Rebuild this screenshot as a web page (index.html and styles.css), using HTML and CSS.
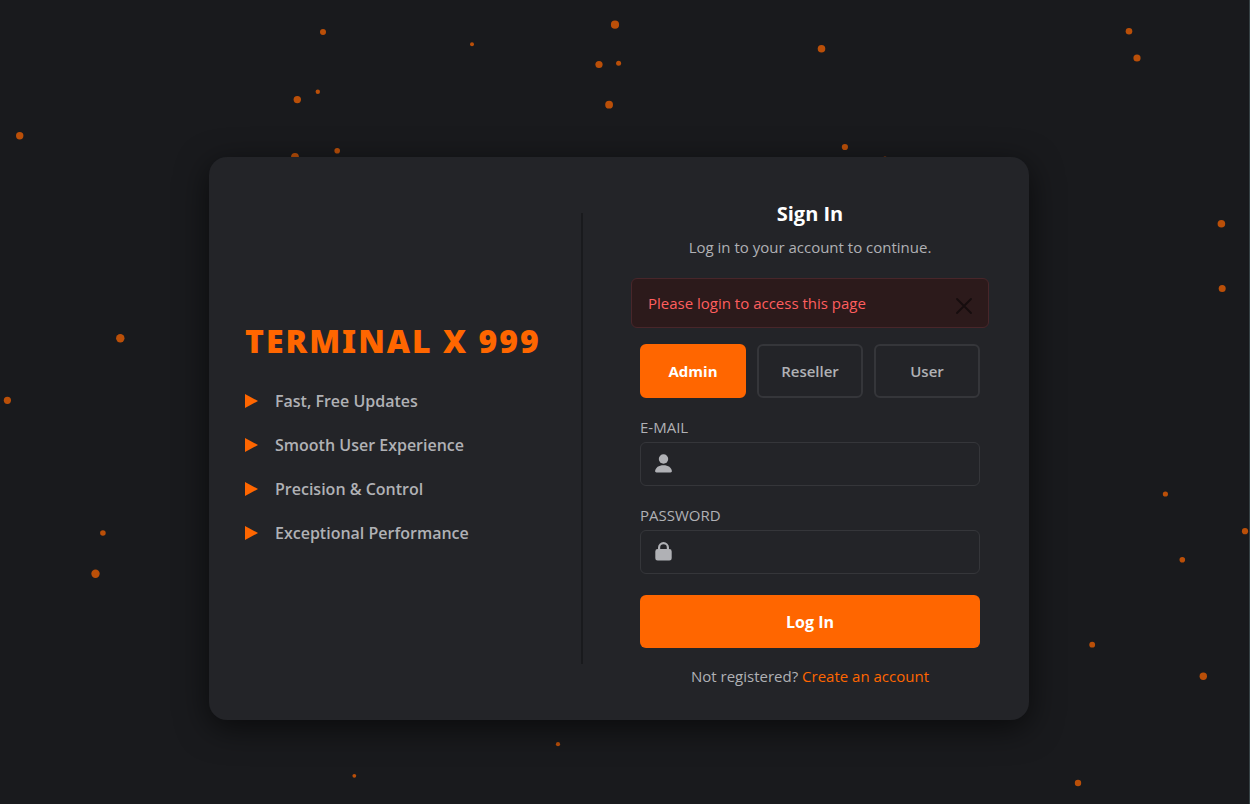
FILE: index.html
```html
<!DOCTYPE html>
<html lang="en">
<head>
<meta charset="utf-8">
<meta name="viewport" content="width=device-width, initial-scale=1">
<title>Terminal X 999 - Sign In</title>
<link rel="stylesheet" href="styles.css">
</head>
<body>
<svg class="particles" viewBox="0 0 1250 804" preserveAspectRatio="xMidYMin slice" aria-hidden="true">
  <circle cx="323" cy="32" r="3"/>
  <circle cx="472" cy="44.2" r="2"/>
  <circle cx="615" cy="24.7" r="4.1"/>
  <circle cx="599" cy="64.5" r="3.6"/>
  <circle cx="618.6" cy="63.3" r="2.5"/>
  <circle cx="317.8" cy="91.7" r="2.2"/>
  <circle cx="297.3" cy="99.6" r="3.7"/>
  <circle cx="609.1" cy="104.7" r="3.9"/>
  <circle cx="337.2" cy="150.8" r="2.8"/>
  <circle cx="295" cy="156.8" r="3.9"/>
  <circle cx="821.5" cy="48.8" r="3.8"/>
  <circle cx="1129" cy="31.3" r="3.3"/>
  <circle cx="1137" cy="58" r="3.6"/>
  <circle cx="844.9" cy="147" r="3.1"/>
  <circle cx="885" cy="158.8" r="2.4"/>
  <circle cx="1221.4" cy="223.8" r="3.8"/>
  <circle cx="1222.2" cy="288.4" r="3.5"/>
  <circle cx="19.7" cy="135.7" r="3.7"/>
  <circle cx="120.3" cy="338.3" r="4.2"/>
  <circle cx="7.4" cy="400.3" r="3.6"/>
  <circle cx="102.9" cy="533" r="2.8"/>
  <circle cx="95.5" cy="573.8" r="4.2"/>
  <circle cx="1165.4" cy="494" r="2.6"/>
  <circle cx="1245" cy="531.2" r="3.1"/>
  <circle cx="1182.3" cy="559.8" r="2.8"/>
  <circle cx="1092.2" cy="644.7" r="2.9"/>
  <circle cx="1203.3" cy="676.2" r="3.7"/>
  <circle cx="1078" cy="783" r="3.2"/>
  <circle cx="558" cy="744.2" r="2.1"/>
  <circle cx="354.3" cy="775.8" r="1.9"/>
</svg>
<main class="page">
  <div class="card">
    <section class="brand">
      <h1 class="brand-title">TERMINAL X 999</h1>
      <ul class="features">
        <li><svg class="marker" viewBox="0 0 13 14" aria-hidden="true"><path d="M0 0L13 7L0 14Z"/></svg>Fast, Free Updates</li>
        <li><svg class="marker" viewBox="0 0 13 14" aria-hidden="true"><path d="M0 0L13 7L0 14Z"/></svg>Smooth User Experience</li>
        <li><svg class="marker" viewBox="0 0 13 14" aria-hidden="true"><path d="M0 0L13 7L0 14Z"/></svg>Precision &amp; Control</li>
        <li><svg class="marker" viewBox="0 0 13 14" aria-hidden="true"><path d="M0 0L13 7L0 14Z"/></svg>Exceptional Performance</li>
      </ul>
    </section>
    <div class="divider"></div>
    <section class="signin">
      <h2 class="signin-title">Sign In</h2>
      <p class="subtitle">Log in to your account to continue.</p>
      <div class="alert" role="alert">
        <span>Please login to access this page</span>
        <button class="alert-close" type="button" aria-label="Close">
          <svg viewBox="0 0 16 16" width="16" height="16" aria-hidden="true"><path d="M1 1L15 15M15 1L1 15"/></svg>
        </button>
      </div>
      <form class="form">
        <div class="roles">
          <button class="role role-active" type="button">Admin</button>
          <button class="role" type="button">Reseller</button>
          <button class="role" type="button">User</button>
        </div>
        <label class="label" for="email">E-MAIL</label>
        <div class="field">
          <svg class="field-icon" viewBox="0 0 17 19" aria-hidden="true"><circle cx="8.500" cy="5" r="4.700"/><path d="M1.500 18.500C.6 18.500 0 18 .1 17.100C.6 13.600 3.600 11.300 8.500 11.300S16.400 13.600 16.900 17.100C17 18 16.400 18.500 15.500 18.500Z"/></svg>
          <input class="input" id="email" type="text">
        </div>
        <label class="label" for="password">PASSWORD</label>
        <div class="field">
          <svg class="field-icon" viewBox="0 0 17 19" aria-hidden="true"><path fill-rule="evenodd" d="M3 7V5.500A5.500 5.400 0 0 1 14 5.500V7H14.300A2.400 2.400 0 0 1 16.700 9.400V16.200A2.300 2.300 0 0 1 14.400 18.500H2.600A2.300 2.300 0 0 1 .3 16.200V9.400A2.400 2.400 0 0 1 2.700 7ZM5.200 7H11.800V5.500A3.300 3.300 0 0 0 5.200 5.500Z"/></svg>
          <input class="input" id="password" type="password">
        </div>
        <button class="submit" type="button">Log In</button>
        <p class="register">Not registered? <a href="#">Create an account</a></p>
      </form>
    </section>
  </div>
</main>
</body>
</html>
```
FILE: styles.css
```css
* {
  box-sizing: border-box;
}

body {
  position: relative;
  margin: 0;
  min-height: 100vh;
  padding-right: 11px;
  border-right: 1px solid #364144;
  background: #191a1d;
  color: #b0b1b5;
  font-family: "Segoe UI", "Open Sans", "Noto Sans", sans-serif;
  font-size: 15px;
  line-height: 24px;
  overflow-x: hidden;
}

h1,
h2,
p,
ul {
  margin: 0;
  padding: 0;
}

button,
input {
  font: inherit;
}

.particles {
  position: absolute;
  inset: 0;
  width: 100vw;
  height: 100vh;
  fill: #ff6600;
  opacity: 0.7;
}

.page {
  display: flex;
  justify-content: center;
  padding: 157px 16px 84px;
}

.card {
  position: relative;
  display: flex;
  width: 100%;
  max-width: 820px;
  background: #232428;
  border-radius: 18px;
  box-shadow: 0 8px 32px rgba(0, 0, 0, 0.6);
}

.brand {
  flex: 1;
  display: flex;
  flex-direction: column;
  justify-content: center;
  padding: 0 36px 12px;
}

.brand-title {
  margin-bottom: 28px;
  color: #ff6600;
  font-family: "Segoe UI", "Noto Sans", "Open Sans", sans-serif;
  font-size: 32px;
  font-weight: 900;
  line-height: 40px;
  letter-spacing: 2px;
  white-space: nowrap;
}

.features {
  display: grid;
  gap: 20px;
  list-style: none;
  font-size: 16px;
  font-weight: 600;
}

.features li {
  display: flex;
  align-items: center;
  gap: 17px;
}

.marker {
  width: 13px;
  height: 14px;
  fill: #ff6600;
}

.divider {
  flex: none;
  align-self: center;
  width: 2px;
  height: 80%;
  background: #191a1d;
}

.signin {
  display: flex;
  flex-direction: column;
  flex: none;
  width: 446px;
  padding: 41px 40px 31px 48px;
}

.signin-title {
  margin-bottom: 5px;
  color: #fff;
  font-size: 20px;
  font-weight: 700;
  line-height: 32px;
  text-align: center;
}

.subtitle {
  margin-bottom: 19px;
  text-align: center;
}

.alert {
  display: flex;
  align-items: center;
  justify-content: space-between;
  height: 50px;
  margin-bottom: 16px;
  padding: 0 16px;
  border: 1px solid #48262a;
  border-radius: 6px;
  background: #2c1a1b;
  color: #ff5e5e;
}

.alert-close {
  display: flex;
  margin-top: 6px;
  padding: 0;
  border: 0;
  background: none;
}

.alert-close path {
  stroke: #160d0e;
  stroke-width: 1.8;
  stroke-linecap: round;
}

.form {
  display: flex;
  flex-direction: column;
  padding: 0 9px;
}

.roles {
  display: grid;
  grid-template-columns: repeat(3, 1fr);
  gap: 11px;
  margin-bottom: 17px;
}

.role {
  height: 54px;
  padding: 0;
  border: 2px solid #35363a;
  border-radius: 6px;
  background: transparent;
  color: #b0b1b5;
  font-weight: 600;
}

.role-active {
  border-color: #ff6600;
  background: #ff6600;
  color: #fff;
  font-weight: 700;
}

.label {
  margin-bottom: 3px;
}

.field {
  display: flex;
  align-items: center;
  height: 44px;
  margin-bottom: 17px;
  padding-left: 14px;
  border: 1px solid #35363a;
  border-radius: 6px;
}

.field-icon {
  flex: none;
  width: 17px;
  height: 19px;
  margin-bottom: 2px;
  fill: #b0b1b5;
}

.input {
  flex: 1;
  min-width: 0;
  height: 100%;
  padding: 0 16px;
  border: 0;
  outline: 0;
  background: transparent;
  color: #fff;
}

.submit {
  height: 53px;
  margin: 4px 0 16px;
  padding: 0;
  border: 0;
  border-radius: 6px;
  background: #ff6600;
  color: #fff;
  font-size: 16px;
  font-weight: 700;
}

.register {
  margin-bottom: 1px;
  text-align: center;
}

.register a {
  color: #ff6600;
  text-decoration: none;
}

@media (max-width: 820px) {
  .card {
    flex-direction: column;
    max-width: 446px;
  }

  .brand {
    padding: 32px 36px 0;
  }

  .divider {
    display: none;
  }

  .signin {
    width: 100%;
  }
}
```
